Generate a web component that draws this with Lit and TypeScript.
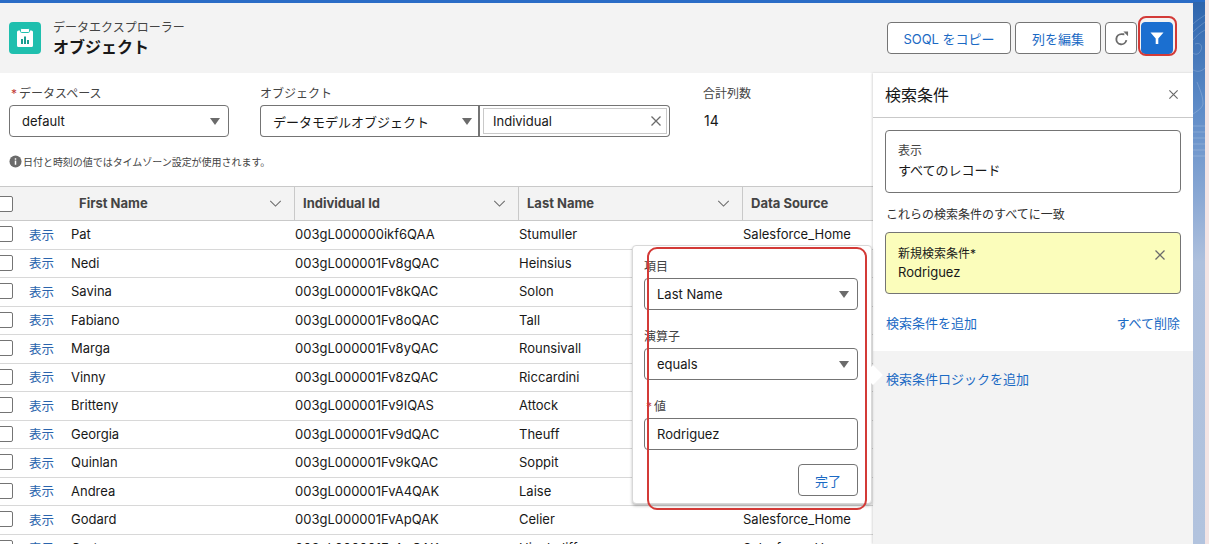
import { LitElement, html, css, svg } from "lit";
import { customElement } from "lit/decorators.js";

const ROWS = [
  ["Pat", "003gL000000ikf6QAA", "Stumuller"],
  ["Nedi", "003gL000001Fv8gQAC", "Heinsius"],
  ["Savina", "003gL000001Fv8kQAC", "Solon"],
  ["Fabiano", "003gL000001Fv8oQAC", "Tall"],
  ["Marga", "003gL000001Fv8yQAC", "Rounsivall"],
  ["Vinny", "003gL000001Fv8zQAC", "Riccardini"],
  ["Britteny", "003gL000001Fv9IQAS", "Attock"],
  ["Georgia", "003gL000001Fv9dQAC", "Theuff"],
  ["Quinlan", "003gL000001Fv9kQAC", "Soppit"],
  ["Andrea", "003gL000001FvA4QAK", "Laise"],
  ["Godard", "003gL000001FvApQAK", "Celier"],
  ["Gerta", "003gL000001FvAqQAK", "Hinchcliffe"],
];

const chevron = html`<svg class="chev" viewBox="0 0 14 8"><path d="M1 1l6 6 6-6" fill="none" stroke="currentColor" stroke-width="1.2"/></svg>`;
const xIcon = html`<svg class="x" viewBox="0 0 12 12"><path d="M1.5 1.5l9 9M10.5 1.5l-9 9" fill="none" stroke="currentColor" stroke-width="1.300"/></svg>`;
const caret = html`<span class="caret"></span>`;

@customElement("app-root")
export class AppRoot extends LitElement {
  static styles = css`
    :host {
      display: block;
      width: 1209px;
      height: 544px;
      overflow: hidden;
      position: relative;
      font-family: Inter, "Noto Sans CJK JP", "Liberation Sans", sans-serif;
      font-size: 13px;
      color: #181818;
      background: #f3e4e4;
    }
    * { box-sizing: border-box; }
    .shell { width: 1205px; height: 544px; }
    .topbar { height: 3px; background: #2a6cc6; }
    .stage { display: flex; height: 541px; }
    .card {
      width: 1193px;
      flex: none;
      display: flex;
      flex-direction: column;
      background: #fff;
      border-top-right-radius: 5px;
      overflow: hidden;
      position: relative;
    }
    .side {
      flex: 1;
      background: linear-gradient(180deg, #2e65ad 0%, #5f8cc8 20%, #8aa8d4 36%, #aec0dd 48%, #b2c3de 100%);
      margin-top: -1px;
    }
    .side svg { display: block; width: 12px; height: 180px; }
    .head {
      height: 70px;
      background: #f3f3f3;
      display: flex;
      align-items: center;
      padding: 0 20px 0 9px;
      flex: none;
    }
    .logo { width: 32px; height: 32px; flex: none; }
    .titles { margin-left: 12px; display: flex; flex-direction: column; }
    .sup { font-size: 12px; line-height: 18px; color: #444; }
    .ttl { font-size: 16px; font-weight: 700; line-height: 20px; color: #181818; }
    .actions { margin-left: auto; display: flex; gap: 4px; }
    .btn {
      height: 32px;
      border: 1px solid #747474;
      border-radius: 4px;
      background: #fff;
      color: #1b6ac4;
      font-size: 13px;
      display: flex;
      align-items: center;
      justify-content: center;
    }
    .b-soql { width: 124px; }
    .b-edit { width: 86px; }
    .b-ref { width: 32px; color: #6b6b6b; }
    .b-ref svg { width: 15px; height: 15px; }
    .b-fil { width: 32px; background: #1b6fd0; border-color: #1b6fd0; color: #fff; }
    .b-fil svg { width: 14px; height: 14px; }
    .main { flex: 1; display: flex; min-height: 0; }
    .left { width: 873px; flex: none; display: flex; flex-direction: column; min-width: 0; position: relative; }
    .filters { height: 113px; flex: none; padding: 11px 9px 0; display: flex; flex-direction: column; }
    .filter-row { display: flex; }
    .lab { font-size: 12px; line-height: 20px; color: #444; height: 21px; }
    .req { color: #c23934; margin-right: 2px; margin-left: 2px; font-size: 12px; }
    .f1 { width: 220px; margin-right: 31px; }
    .f2 { width: 410px; margin-right: 33px; }
    .f3 { width: 100px; }
    .select, .input {
      height: 32px;
      border: 1px solid #747474;
      border-radius: 4px;
      background: #fff;
      display: flex;
      align-items: center;
      padding: 0 8px 0 12px;
      font-size: 13px;
      color: #181818;
    }
    .caret {
      margin-left: auto;
      width: 0;
      height: 0;
      border-left: 5.5px solid transparent;
      border-right: 5.5px solid transparent;
      border-top: 7px solid #6b6b6b;
    }
    .combo { display: flex; }
    .combo .select { width: 220px; border-radius: 4px 0 0 4px; border-right-width: 2px; padding-right: 6px; }
    .combo-in {
      width: 190px;
      height: 32px;
      border: 1px solid #747474;
      border-left: none;
      border-radius: 0 4px 4px 0;
      padding: 2px 2px 2px 3px;
      display: flex;
    }
    .combo-box {
      flex: 1;
      border: 1px solid #c9c9c9;
      display: flex;
      align-items: center;
      padding: 0 4px 0 9px;
      font-size: 13px;
    }
    .combo-box .x { margin-left: auto; width: 12px; height: 12px; color: #6b6b6b; }
    .count { font-size: 14px; line-height: 32px; color: #181818; padding-left: 1px; }
    .info { display: flex; align-items: center; gap: 1px; font-size: 10px; letter-spacing: -0.04px; color: #444; margin-top: 17px; height: 14px; }
    .info svg { width: 13px; height: 13px; flex: none; }
    .table { flex: 1; overflow: hidden; }
    .thead, .tr {
      display: grid;
      grid-template-columns: 71px 224px 224px 224px 1fr;
      align-items: center;
    }
    .thead {
      height: 35px;
      background: #f3f3f3;
      border-top: 1px solid #c9c9c9;
      border-bottom: 1px solid #c9c9c9;
      color: #444;
      font-weight: 700;
      font-size: 13px;
    }
    .thead .cbcell { height: 100%; }
    .th { display: flex; align-items: center; height: 100%; padding: 0 12px 1px 8px; border-right: 1px solid #c9c9c9; }
    .th:last-child { border-right: none; }
    .chev { width: 13px; height: 7px; margin-left: auto; color: #6b6b6b; flex: none; }
    .tr {
      height: 28.5px;
      padding-bottom: 1px;
      border-bottom: 1px solid #d8d8d8;
      font-size: 13px;
      color: #181818;
    }
    .cbcell { display: flex; align-items: center; }
    .cb {
      width: 16px;
      height: 16px;
      margin-left: -3px;
      border: 1px solid #747474;
      border-radius: 2px;
      background: #fff;
      flex: none;
      margin-right: 16px;
    }
    .view { color: #2a64ad; font-size: 12.5px; }
    .td { white-space: nowrap; }
    .panel {
      flex: 1;
      display: flex;
      flex-direction: column;
      background: #fff;
      box-shadow: -1px 0 2px rgba(0, 0, 0, 0.15);
      position: relative;
    }
    .p-head {
      height: 45px;
      flex: none;
      border-bottom: 1px solid #c9c9c9;
      display: flex;
      align-items: center;
      padding: 0 14px 2px 12px;
      font-size: 16px;
      color: #181818;
    }
    .p-head .x { margin-left: auto; width: 11px; height: 11px; color: #6b6b6b; }
    .p-body { padding: 12px 12px 0 12px; height: 233px; flex: none; }
    .scope {
      height: 63px;
      border: 1px solid #747474;
      border-radius: 4px;
      padding: 11px 12px 0;
      font-size: 13px;
      line-height: 18.5px;
    }
    .scope-l { color: #444; font-size: 12px; }
    .match { font-size: 12px; margin-top: 14px; height: 18px; line-height: 16px; color: #2e2e2e; margin-left: 1px; }
    .rule {
      height: 62px;
      margin-top: 7px;
      border: 1px solid #747474;
      border-radius: 4px;
      background: #fbfdbb;
      padding: 11px 12px 0;
      font-size: 13px;
      line-height: 19px;
      display: flex;
    }
    .rule-l { font-size: 12px; }
    .rule .x { margin-left: auto; margin-top: 5px; margin-right: 2px; width: 12px; height: 12px; color: #6b6b6b; flex: none; }
    .links { display: flex; justify-content: space-between; margin: 19px 1px 0 1px; color: #1b6ac4; font-size: 13px; }
    .p-foot { flex: 1; background: #f3f3f3; padding: 19px 13px; color: #1b6ac4; font-size: 13px; line-height: 19px; }
    .pop {
      position: absolute;
      left: 632px;
      top: 172px;
      width: 240px;
      height: 259px;
      background: #fff;
      border: 1px solid #d8d8d8;
      border-radius: 4px;
      box-shadow: 0 2px 3px rgba(0, 0, 0, 0.25);
      padding: 11px 13px 0 11px;
      z-index: 2;
      display: flex;
      flex-direction: column;
    }
    .pop::after {
      content: "";
      position: absolute;
      right: -9px;
      top: 122px;
      width: 14px;
      height: 14px;
      background: #fff;
      transform: rotate(45deg);
    }
    .p-lab { height: 21px; font-size: 12px; line-height: 20px; color: #444; }
    .p-field { margin-bottom: 17px; }
    .done-row { display: flex; justify-content: flex-end; margin-top: -3px; }
    .b-done { width: 60px; }
    .mark {
      position: absolute;
      border: 2px solid #d33a37;
      border-radius: 8px;
      z-index: 3;
      pointer-events: none;
    }
    .m-pop { left: 647px; top: 247px; width: 220px; height: 263px; border-radius: 10px; }
    .m-fil { left: 1138px; top: 16px; width: 39px; height: 40px; border-radius: 8px; }
  `;

  private logo() {
    return svg`<svg class="logo" viewBox="0 0 32 32">
      <rect width="32" height="32" rx="4" fill="#1fbfae"/>
      <path d="M9.500 8.500h13a1.500 1.500 0 0 1 1.500 1.500v13.500a1.500 1.500 0 0 1-1.500 1.500h-13A1.500 1.500 0 0 1 8 23.500V10a1.500 1.500 0 0 1 1.500-1.500z" fill="#fff"/>
      <rect x="11.500" y="6.500" width="9" height="4" rx="1.200" fill="#fff" stroke="#1fbfae" stroke-width="1"/>
      <rect x="12" y="17" width="2" height="5" fill="#1a9e90"/>
      <rect x="15" y="14.500" width="2" height="7.500" fill="#1a9e90"/>
      <rect x="18" y="18" width="2" height="4" fill="#1a9e90"/>
    </svg>`;
  }

  render() {
    return html`
      <div class="shell">
        <div class="topbar"></div>
        <div class="stage">
          <div class="card">
            <header class="head">
              ${this.logo()}
              <div class="titles">
                <span class="sup">データエクスプローラー</span>
                <span class="ttl">オブジェクト</span>
              </div>
              <div class="actions">
                <div class="btn b-soql">SOQL をコピー</div>
                <div class="btn b-edit">列を編集</div>
                <div class="btn b-ref">
                  <svg viewBox="0 0 16 16"><path d="M13.200 9.800A5.400 5.400 0 1 1 8 3.400h3" fill="none" stroke="currentColor" stroke-width="2"/><path d="M10 0.500l5 0v5z" fill="currentColor"/></svg>
                </div>
                <div class="btn b-fil">
                  <svg viewBox="0 0 14 14"><path d="M0.500 1.500h13L8.300 7.500v5.500H5.700V7.500z" fill="currentColor"/></svg>
                </div>
              </div>
            </header>
            <div class="main">
              <div class="left">
                <div class="filters">
                  <div class="filter-row">
                    <div class="f1">
                      <div class="lab"><span class="req">*</span>データスペース</div>
                      <div class="select">default${caret}</div>
                    </div>
                    <div class="f2">
                      <div class="lab">オブジェクト</div>
                      <div class="combo">
                        <div class="select">データモデルオブジェクト${caret}</div>
                        <div class="combo-in"><div class="combo-box">Individual${xIcon}</div></div>
                      </div>
                    </div>
                    <div class="f3">
                      <div class="lab">合計列数</div>
                      <div class="count">14</div>
                    </div>
                  </div>
                  <div class="info">
                    <svg viewBox="0 0 14 14"><circle cx="7" cy="7" r="6.500" fill="#6b6b6b"/><rect x="6.200" y="6" width="1.600" height="4.500" fill="#fff"/><rect x="6.200" y="3.500" width="1.600" height="1.600" fill="#fff"/></svg>
                    <span>日付と時刻の値ではタイムゾーン設定が使用されます。</span>
                  </div>
                </div>
                <div class="table">
                  <div class="thead">
                    <div class="cbcell"><span class="cb"></span></div>
                    <div class="th">First Name${chevron}</div>
                    <div class="th">Individual Id${chevron}</div>
                    <div class="th">Last Name${chevron}</div>
                    <div class="th">Data Source</div>
                  </div>
                  ${ROWS.map(
                    (r) => html`<div class="tr">
                      <div class="cbcell"><span class="cb"></span><span class="view">表示</span></div>
                      <div class="td">${r[0]}</div>
                      <div class="td">${r[1]}</div>
                      <div class="td">${r[2]}</div>
                      <div class="td">Salesforce_Home</div>
                    </div>`
                  )}
                </div>
                <div class="pop">
                  <div class="p-field">
                    <div class="p-lab">項目</div>
                    <div class="select">Last Name${caret}</div>
                  </div>
                  <div class="p-field">
                    <div class="p-lab">演算子</div>
                    <div class="select">equals${caret}</div>
                  </div>
                  <div class="p-field">
                    <div class="p-lab"><span class="req">*</span>値</div>
                    <div class="input">Rodriguez</div>
                  </div>
                  <div class="done-row"><div class="btn b-done">完了</div></div>
                </div>
              </div>
              <aside class="panel">
                <div class="p-head">検索条件${xIcon}</div>
                <div class="p-body">
                  <div class="scope">
                    <div class="scope-l">表示</div>
                    <div>すべてのレコード</div>
                  </div>
                  <div class="match">これらの検索条件のすべてに一致</div>
                  <div class="rule">
                    <div>
                      <div class="rule-l">新規検索条件*</div>
                      <div>Rodriguez</div>
                    </div>
                    ${xIcon}
                  </div>
                  <div class="links"><span>検索条件を追加</span><span>すべて削除</span></div>
                </div>
                <div class="p-foot">検索条件ロジックを追加</div>
              </aside>
            </div>
          </div>
          <div class="side">
            <svg viewBox="0 0 12 180" fill="none" stroke="#fff" stroke-opacity="0.28" stroke-width="0.7">
              <path d="M0 22C4 18 8 16 12 13M0 30C4 26 8 23 12 20M0 38C4 33 8 30 12 28"/>
              <path d="M2 42c5-2 8 2 6 6-2 5-6 5-8 3"/>
              <path d="M0 68c4 2 8 2 12-2M4 80c3 8 6 14 6 22-1 4-4 6-10 10"/>
              <path d="M0 124h12M0 130h12M0 136h12M0 142h12M0 148h12M0 154h12"/>
            </svg>
          </div>
        </div>
      </div>
      <div class="mark m-pop"></div>
      <div class="mark m-fil"></div>
    `;
  }
}
